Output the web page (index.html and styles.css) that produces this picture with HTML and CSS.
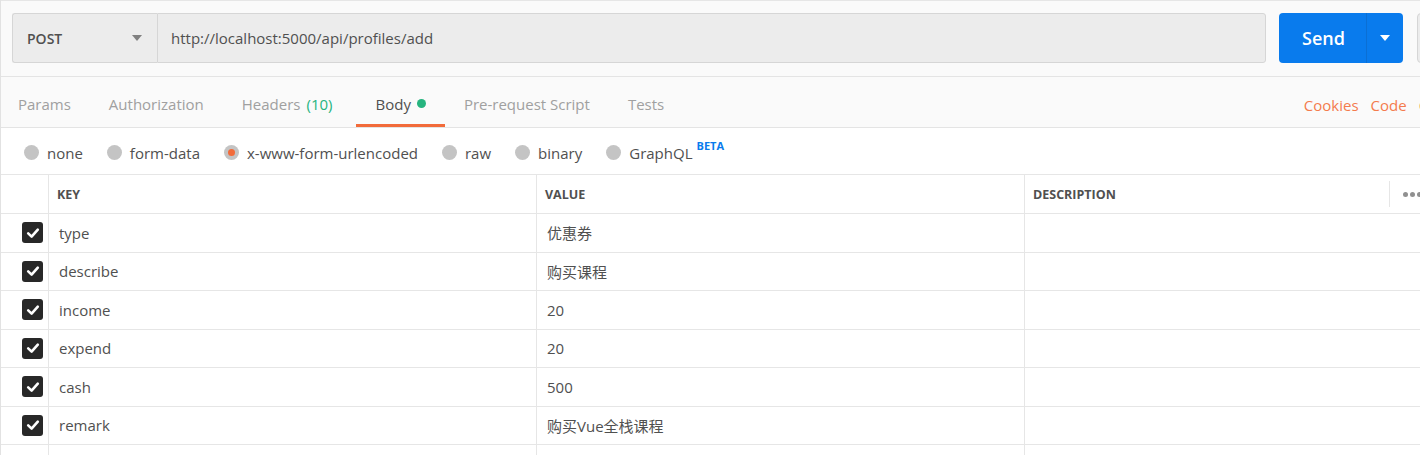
FILE: index.html
```html
<!DOCTYPE html>
<html>
<head>
<meta charset="utf-8">
<link rel="stylesheet" href="styles.css">
</head>
<body>
<div class="app">
  <div class="urlbar">
    <div class="method">
      <span class="method-name">POST</span>
      <span class="caret-gray"></span>
    </div>
    <div class="url">http://localhost:5000/api/profiles/add</div>
    <div class="send">
      <span class="send-label">Send</span>
      <span class="send-split"><span class="caret-white"></span></span>
    </div>
    <div class="save"></div>
  </div>

  <div class="tabs">
    <div class="tab">Params</div>
    <div class="tab">Authorization</div>
    <div class="tab tab-headers">Headers <span class="count">(10)</span></div>
    <div class="tab active">Body <span class="dot"></span></div>
    <div class="tab">Pre-request Script</div>
    <div class="tab">Tests</div>
    <div class="tab-links">
      <span>Cookies</span>
      <span>Code</span>
      <span>Comments</span>
    </div>
  </div>

  <div class="radios">
    <label class="radio"><span class="circle"></span>none</label>
    <label class="radio"><span class="circle"></span>form-data</label>
    <label class="radio"><span class="circle on"></span>x-www-form-urlencoded</label>
    <label class="radio"><span class="circle"></span>raw</label>
    <label class="radio"><span class="circle"></span>binary</label>
    <label class="radio"><span class="circle"></span>GraphQL<sup class="beta">BETA</sup></label>
  </div>

  <div class="table">
    <div class="row head">
      <div class="cell chk"></div>
      <div class="cell key">KEY</div>
      <div class="cell val">VALUE</div>
      <div class="cell desc">DESCRIPTION<span class="more"><span class="sep"></span><span class="dots"><i></i><i></i><i></i></span></span></div>
    </div>
    <div class="row">
      <div class="cell chk"><span class="box"><svg viewBox="0 0 20 20" width="20" height="20"><path d="M5.2 10.4 L8.6 13.6 L14.8 6.6" fill="none" stroke="#fff" stroke-width="2.6" stroke-linecap="round" stroke-linejoin="round"/></svg></span></div>
      <div class="cell key">type</div>
      <div class="cell val">优惠券</div>
      <div class="cell desc"></div>
    </div>
    <div class="row">
      <div class="cell chk"><span class="box"><svg viewBox="0 0 20 20" width="20" height="20"><path d="M5.2 10.4 L8.6 13.6 L14.8 6.6" fill="none" stroke="#fff" stroke-width="2.6" stroke-linecap="round" stroke-linejoin="round"/></svg></span></div>
      <div class="cell key">describe</div>
      <div class="cell val">购买课程</div>
      <div class="cell desc"></div>
    </div>
    <div class="row">
      <div class="cell chk"><span class="box"><svg viewBox="0 0 20 20" width="20" height="20"><path d="M5.2 10.4 L8.6 13.6 L14.8 6.6" fill="none" stroke="#fff" stroke-width="2.6" stroke-linecap="round" stroke-linejoin="round"/></svg></span></div>
      <div class="cell key">income</div>
      <div class="cell val">20</div>
      <div class="cell desc"></div>
    </div>
    <div class="row">
      <div class="cell chk"><span class="box"><svg viewBox="0 0 20 20" width="20" height="20"><path d="M5.2 10.4 L8.6 13.6 L14.8 6.6" fill="none" stroke="#fff" stroke-width="2.6" stroke-linecap="round" stroke-linejoin="round"/></svg></span></div>
      <div class="cell key">expend</div>
      <div class="cell val">20</div>
      <div class="cell desc"></div>
    </div>
    <div class="row">
      <div class="cell chk"><span class="box"><svg viewBox="0 0 20 20" width="20" height="20"><path d="M5.2 10.4 L8.6 13.6 L14.8 6.6" fill="none" stroke="#fff" stroke-width="2.6" stroke-linecap="round" stroke-linejoin="round"/></svg></span></div>
      <div class="cell key">cash</div>
      <div class="cell val">500</div>
      <div class="cell desc"></div>
    </div>
    <div class="row">
      <div class="cell chk"><span class="box"><svg viewBox="0 0 20 20" width="20" height="20"><path d="M5.2 10.4 L8.6 13.6 L14.8 6.6" fill="none" stroke="#fff" stroke-width="2.6" stroke-linecap="round" stroke-linejoin="round"/></svg></span></div>
      <div class="cell key">remark</div>
      <div class="cell val">购买Vue全栈课程</div>
      <div class="cell desc"></div>
    </div>
    <div class="row">
      <div class="cell chk"></div>
      <div class="cell key"></div>
      <div class="cell val"></div>
      <div class="cell desc"></div>
    </div>
  </div>
</div>
</body>
</html>
```

FILE: styles.css
```css
* { box-sizing: border-box; }
html, body { margin: 0; padding: 0; }
body {
  width: 1420px;
  height: 455px;
  overflow: hidden;
  background: #fff;
  font-family: "Open Sans", "Noto Sans CJK SC", sans-serif;
  font-size: 15px;
  color: #505050;
}
.app {
  border-left: 1px solid #e2e2e2;
  height: 455px;
  overflow: hidden;
}

/* URL bar */
.urlbar {
  display: flex;
  align-items: stretch;
  background: #fafafa;
  border-top: 1px solid #e6e6e6;
  padding: 12px 0 13px 11px;
  height: 77px;
  border-bottom: 1px solid #e4e4e4;
}
.urlbar > div { flex-shrink: 0; }
.method {
  width: 145px;
  height: 50px;
  background: #ececec;
  border: 1px solid #d6d6d6;
  border-right: none;
  border-radius: 3px 0 0 3px;
  display: flex;
  align-items: center;
  justify-content: space-between;
  padding: 0 15px 0 14px;
}
.method-name { font-weight: 600; font-size: 14px; color: #505050; }
.caret-gray {
  width: 0; height: 0;
  border-left: 5px solid transparent;
  border-right: 5px solid transparent;
  border-top: 6px solid #808080;
}
.url {
  width: 1109px;
  height: 50px;
  background: #ececec;
  border: 1px solid #d6d6d6;
  border-radius: 0 3px 3px 0;
  display: flex;
  align-items: center;
  padding-left: 13px;
  color: #505050;
  font-size: 15px;
}
.send {
  margin-left: 13px;
  width: 124px;
  height: 50px;
  background: #097bed;
  border-radius: 4px;
  display: flex;
  align-items: stretch;
  color: #fff;
}
.send-label {
  flex: 1;
  display: flex;
  align-items: center;
  justify-content: center;
  font-weight: 600;
  font-size: 18px;
  padding-left: 2px;
}
.send-split {
  width: 37px;
  border-left: 1px solid #0b6fd4;
  display: flex;
  align-items: center;
  justify-content: center;
}
.caret-white {
  width: 0; height: 0;
  border-left: 5px solid transparent;
  border-right: 5px solid transparent;
  border-top: 6px solid #fff;
}
.save {
  margin-left: 14px;
  width: 60px;
  height: 50px;
  background: #ececec;
  border: 1px solid #d6d6d6;
  border-radius: 4px;
}

/* tabs */
.tabs {
  display: flex;
  align-items: stretch;
  height: 51px;
  background: #fafafa;
  border-bottom: 1px solid #e4e4e4;
}
.tab {
  display: flex;
  align-items: center;
  padding: 6px 19px 0 19px;
  color: #a0a0a0;
  font-size: 15px;
  border-bottom: 3px solid transparent;
  flex-shrink: 0;
}
.tab:first-child { padding-left: 17px; }
.tab.tab-headers { padding-right: 24px; }
.tab .count { color: #26b47f; margin-left: 6px; }
.tab.active { color: #505050; border-bottom-color: #f26b3a; }
.dot {
  display: inline-block;
  width: 9px; height: 9px;
  border-radius: 50%;
  background: #26b47f;
  margin-left: 6px;
}
.tab-links {
  margin-left: auto;
  display: flex;
  align-items: center;
  gap: 12px;
  color: #f47b4d;
  padding-top: 5px;
  margin-right: -75px;
  flex-shrink: 0;
}

/* radios */
.radios {
  display: flex;
  align-items: center;
  height: 47px;
  padding-left: 23px;
  border-bottom: 1px solid #e6e6e6;
  padding-top: 3px;
}
.radio {
  display: flex;
  align-items: center;
  margin-right: 24px;
  color: #505050;
  font-size: 15px;
}
.circle {
  width: 15px; height: 15px;
  border-radius: 50%;
  background: #c4c4c4;
  margin-right: 8px;
  display: flex;
  align-items: center;
  justify-content: center;
}
.circle.on::after {
  content: "";
  width: 7px; height: 7px;
  border-radius: 50%;
  background: #f26b3a;
}
.beta {
  color: #097bed;
  font-weight: 700;
  font-size: 11px;
  margin-left: 4px;
  position: relative;
  top: -7px;
  vertical-align: baseline;
}

/* table */
.table { display: flex; flex-direction: column; }
.row {
  display: flex;
  height: 38.5px;
  border-bottom: 1px solid #e6e6e6;
  flex-shrink: 0;
}
.row.head { height: 39px; }
.cell {
  display: flex;
  align-items: center;
  border-right: 1px solid #e6e6e6;
  color: #505050;
  font-size: 15px;
  padding-left: 10px;
  flex-shrink: 0;
}
.cell.chk { width: 48px; justify-content: flex-end; padding: 0 5px 0 0; }
.cell.key { width: 488px; }
.cell.val { width: 488px; }
.cell.desc { flex: 1; border-right: none; flex-shrink: 1; min-width: 0; }
.head .cell {
  font-weight: 700;
  font-size: 12.5px;
  color: #505050;
  padding-left: 8px;
}
.more {
  margin-left: auto;
  display: flex;
  align-items: center;
  height: 100%;
}
.sep {
  width: 1px;
  height: 26px;
  background: #e6e6e6;
  margin-right: 13px;
}
.dots { display: flex; gap: 2px; width: 17px; overflow: hidden; }
.dots i {
  display: block;
  width: 5px; height: 5px;
  border-radius: 50%;
  background: #909090;
  flex-shrink: 0;
}
.box {
  width: 21px; height: 21px;
  background: #282828;
  border-radius: 3px;
  display: flex;
  align-items: center;
  justify-content: center;
}
.box svg { display: block; }
```
